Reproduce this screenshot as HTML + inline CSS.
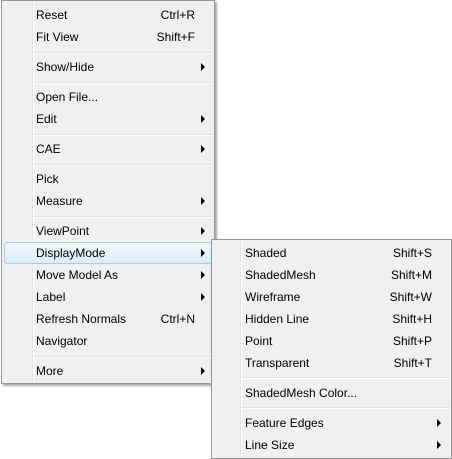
<!DOCTYPE html>
<html><head><style>
html,body{margin:0;padding:0;width:452px;height:459px;background:#fff;overflow:hidden;font-family:"Liberation Sans",sans-serif;font-size:12px;color:#000}
.m{position:absolute;background:#f0f0f0;border:1px solid #979797;box-shadow:2px 2px 2px rgba(0,0,0,.35)}
.vl{position:absolute;top:2px;bottom:2px;width:1px;background:#e2e3e3;border-right:1px solid #fff}
.it{position:absolute;left:2px;right:2px;height:22px;line-height:22px}
.it .t{position:absolute}
.it .s{position:absolute;text-align:right}
.ar{position:absolute;top:7px;width:0;height:0;border-top:4px solid transparent;border-bottom:4px solid transparent;border-left:4px solid #000}
.sp{position:absolute;height:1px;background:#e0e0e0;border-bottom:1px solid #fff}
.hl{background:linear-gradient(#f1f7fd,#dcebfc);border:1px solid #a8cbef;border-radius:3px;box-sizing:border-box;line-height:20px}
</style></head><body>
<div class="m" style="left:1px;top:0;width:212px;height:382px">
<div class="vl" style="left:30px"></div>
<div class="it" style="top:3px"><span class="t" style="left:32px">Reset</span><span class="s" style="right:17px">Ctrl+R</span></div>
<div class="it" style="top:25px"><span class="t" style="left:32px">Fit View</span><span class="s" style="right:17px">Shift+F</span></div>
<div class="sp" style="left:32px;right:2px;top:51px"></div>
<div class="it" style="top:55px"><span class="t" style="left:32px">Show/Hide</span><span class="ar" style="left:197px"></span></div>
<div class="sp" style="left:32px;right:2px;top:81px"></div>
<div class="it" style="top:85px"><span class="t" style="left:32px">Open File...</span></div>
<div class="it" style="top:107px"><span class="t" style="left:32px">Edit</span><span class="ar" style="left:197px"></span></div>
<div class="sp" style="left:32px;right:2px;top:133px"></div>
<div class="it" style="top:137px"><span class="t" style="left:32px">CAE</span><span class="ar" style="left:197px"></span></div>
<div class="sp" style="left:32px;right:2px;top:163px"></div>
<div class="it" style="top:167px"><span class="t" style="left:32px">Pick</span></div>
<div class="it" style="top:189px"><span class="t" style="left:32px">Measure</span><span class="ar" style="left:197px"></span></div>
<div class="sp" style="left:32px;right:2px;top:215px"></div>
<div class="it" style="top:219px"><span class="t" style="left:32px">ViewPoint</span><span class="ar" style="left:197px"></span></div>
<div class="it hl" style="top:241px"><span class="t" style="left:31px">DisplayMode</span><span class="ar" style="left:196px;top:6px"></span></div>
<div class="it" style="top:263px"><span class="t" style="left:32px">Move Model As</span><span class="ar" style="left:197px"></span></div>
<div class="it" style="top:285px"><span class="t" style="left:32px">Label</span><span class="ar" style="left:197px"></span></div>
<div class="it" style="top:307px"><span class="t" style="left:32px">Refresh Normals</span><span class="s" style="right:17px">Ctrl+N</span></div>
<div class="it" style="top:329px"><span class="t" style="left:32px">Navigator</span></div>
<div class="sp" style="left:32px;right:2px;top:355px"></div>
<div class="it" style="top:359px"><span class="t" style="left:32px">More</span><span class="ar" style="left:197px"></span></div>
</div>
<div class="m" style="left:211px;top:239px;width:239px;height:218px;box-shadow:none">
<div class="vl" style="left:28px"></div>
<div class="it" style="top:2px"><span class="t" style="left:31px">Shaded</span><span class="s" style="right:17px">Shift+S</span></div>
<div class="it" style="top:24px"><span class="t" style="left:31px">ShadedMesh</span><span class="s" style="right:17px">Shift+M</span></div>
<div class="it" style="top:46px"><span class="t" style="left:31px">Wireframe</span><span class="s" style="right:17px">Shift+W</span></div>
<div class="it" style="top:68px"><span class="t" style="left:31px">Hidden Line</span><span class="s" style="right:17px">Shift+H</span></div>
<div class="it" style="top:90px"><span class="t" style="left:31px">Point</span><span class="s" style="right:17px">Shift+P</span></div>
<div class="it" style="top:112px"><span class="t" style="left:31px">Transparent</span><span class="s" style="right:17px">Shift+T</span></div>
<div class="sp" style="left:30px;right:2px;top:137px"></div>
<div class="it" style="top:142px"><span class="t" style="left:31px">ShadedMesh Color...</span></div>
<div class="sp" style="left:30px;right:2px;top:167px"></div>
<div class="it" style="top:172px"><span class="t" style="left:31px">Feature Edges</span><span class="ar" style="left:223px"></span></div>
<div class="it" style="top:194px"><span class="t" style="left:31px">Line Size</span><span class="ar" style="left:223px"></span></div>
</div>
</body></html>
